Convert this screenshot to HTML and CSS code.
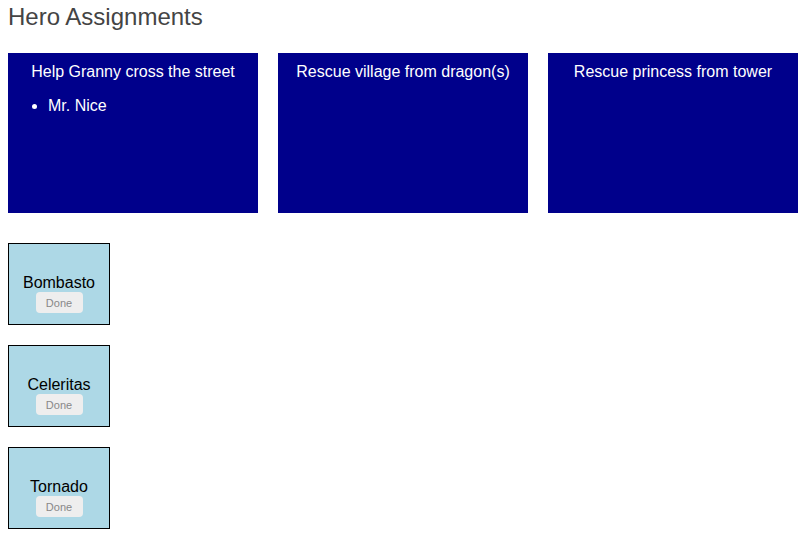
FILE: index.html
```html
<!DOCTYPE html>
<html>
<head>
<meta charset="utf-8">
<link rel="stylesheet" href="styles.css">
</head>
<body>
<h2 class="title">Hero Assignments</h2>
<div class="jobs">
  <div class="job">
    <div class="job-title">Help Granny cross the street</div>
    <ul class="job-list"><li>Mr. Nice</li></ul>
  </div>
  <div class="job">
    <div class="job-title">Rescue village from dragon(s)</div>
  </div>
  <div class="job">
    <div class="job-title">Rescue princess from tower</div>
  </div>
</div>
<div class="heroes">
  <div class="hero"><div class="hero-name">Bombasto</div><button class="done">Done</button></div>
  <div class="hero"><div class="hero-name">Celeritas</div><button class="done">Done</button></div>
  <div class="hero"><div class="hero-name">Tornado</div><button class="done">Done</button></div>
</div>
</body>
</html>
```
FILE: styles.css
```css
html, body {
  margin: 0;
  padding: 0;
}
body {
  padding: 0 8px;
  font-family: "Liberation Sans", Arial, sans-serif;
  background: #fff;
}
.title {
  margin: 3px 0 22px;
  font-size: 24px;
  line-height: 28px;
  font-weight: normal;
  color: #444;
}
.jobs {
  display: flex;
  gap: 20px;
}
.job {
  width: 250px;
  height: 160px;
  background: #00008b;
  color: #fff;
  box-sizing: border-box;
  padding-top: 10px;
}
.job-title {
  text-align: center;
  font-size: 16px;
  line-height: 18px;
}
.job-list {
  margin: 16px 0 0;
  padding-left: 40px;
  font-size: 16px;
  line-height: 18px;
}
.heroes {
  margin-top: 30px;
  display: flex;
  flex-direction: column;
  gap: 20px;
}
.hero {
  width: 100px;
  height: 80px;
  border: 1px solid #000;
  background: #add8e6;
  display: flex;
  flex-direction: column;
  align-items: center;
}
.hero-name {
  margin-top: 30px;
  font-size: 16px;
  line-height: 18px;
  color: #000;
}
.done {
  margin-top: 0;
  width: 47px;
  height: 21px;
  padding: 0;
  border: none;
  border-radius: 4px;
  background: #eee;
  color: #888;
  font-family: "Liberation Sans", Arial, sans-serif;
  font-size: 11px;
}
```
